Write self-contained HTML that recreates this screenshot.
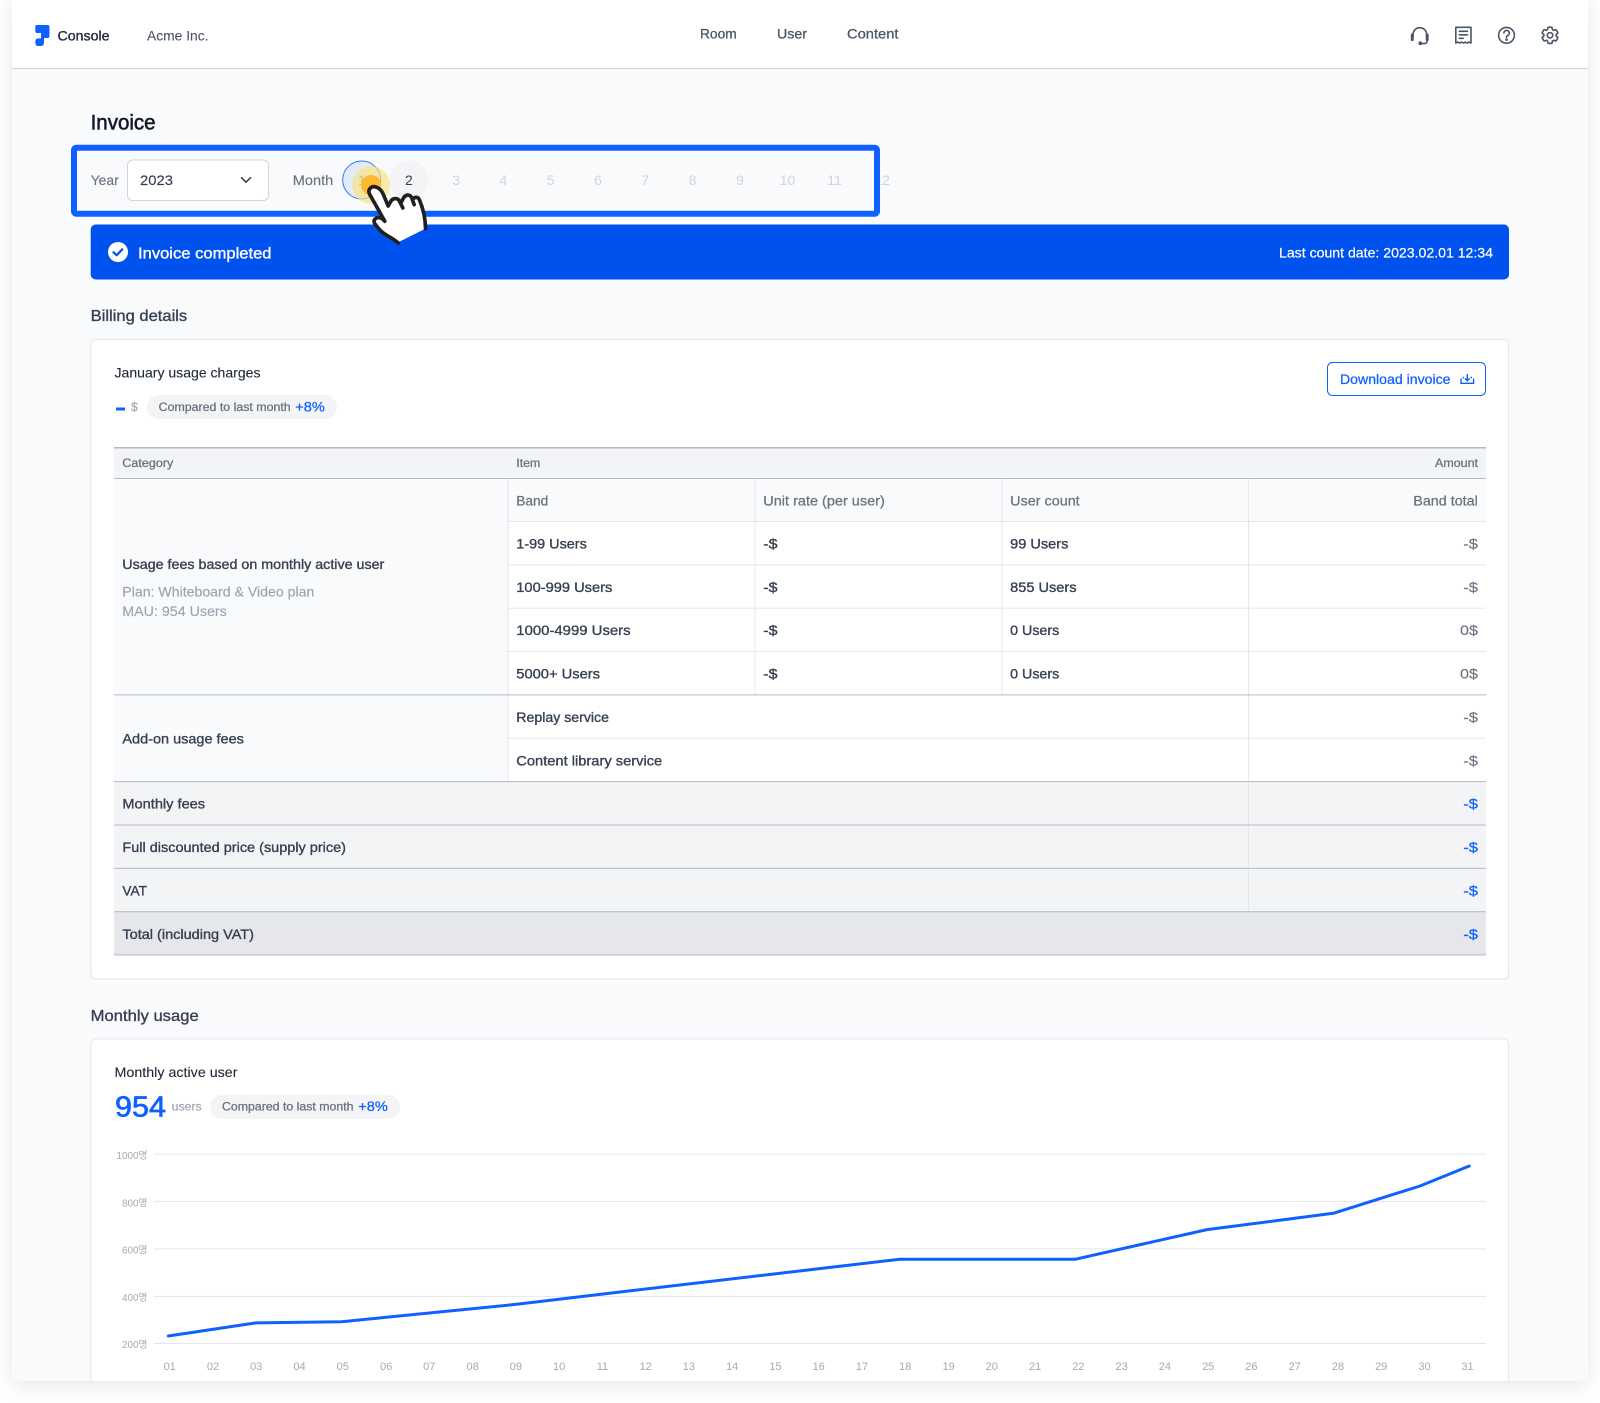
<!DOCTYPE html>
<html lang="en">
<head>
<meta charset="utf-8">
<title>Invoice - Console</title>
<style>
html,body{margin:0;padding:0;background:#fff;width:1600px;height:1403px;overflow:hidden}
svg{display:block;filter:blur(.25px)}
text{font-family:"Liberation Sans","Noto Sans CJK KR",sans-serif;font-size:14px;fill:#374151}
.m{stroke:#374151;stroke-width:.35px}
.s{stroke:#111827;stroke-width:.55px;fill:#111827}
.g{fill:#6b7280;stroke:#6b7280;stroke-width:.15px}
.gm{fill:#6b7280;stroke:#6b7280;stroke-width:.28px}
.l{fill:#9ca3af;stroke:#9ca3af;stroke-width:.15px}
.b{fill:#1060ff;stroke:#1060ff;stroke-width:.25px}
.off{fill:#d1d5db}
.c{font-size:12px}
.y{font-size:10px;fill:#a3a9b3}
.x{font-size:11px;fill:#a3a9b3}
</style>
</head>
<body>
<svg xmlns="http://www.w3.org/2000/svg" width="1600" height="1403" viewBox="0 0 1600 1403">
<defs>
<filter id="sh" x="-5%" y="-5%" width="110%" height="110%"><feDropShadow dx="0" dy="4" stdDeviation="10" flood-color="#000" flood-opacity=".1"/></filter>
<clipPath id="fr"><path d="M12 0H1588V1373a8 8 0 0 1-8 8H20a8 8 0 0 1-8-8Z"/></clipPath>
</defs>
<rect width="1600" height="1403" fill="#fff"/>
<path d="M12 0H1588V1373a8 8 0 0 1-8 8H20a8 8 0 0 1-8-8Z" fill="#f9fafb" filter="url(#sh)"/>
<g clip-path="url(#fr)">
<!-- header -->
<rect x="12" y="0" width="1576" height="68" fill="#fff"/>
<rect x="12" y="68" width="1576" height="1" fill="#d1d5db"/>
<path d="M37 25H47.5a2 2 0 0 1 2 2V36a2 2 0 0 1-2 2H44v5a3 3 0 0 1-3 3H38a2.6 2.6 0 0 1-2.6-2.6V41a2.6 2.6 0 0 1 2.6-2.6H41V33H37a1.7 1.7 0 0 1-1.7-1.7V26.7A1.7 1.7 0 0 1 37 25Z" fill="#1060ff"/>
<text x="57.5" y="40.5" textLength="52" lengthAdjust="spacingAndGlyphs" class="s" style="fill:#1f2937;stroke:#1f2937;stroke-width:.35px">Console</text>
<text x="147" y="40.5" textLength="61.5" lengthAdjust="spacingAndGlyphs" style="fill:#4b5563;stroke:#4b5563;stroke-width:.1px">Acme Inc.</text>
<text x="700" y="38.3" textLength="36.7" lengthAdjust="spacingAndGlyphs" style="fill:#4b5563;stroke:#4b5563;stroke-width:.3px">Room</text>
<text x="777" y="38.3" textLength="30" lengthAdjust="spacingAndGlyphs" style="fill:#4b5563;stroke:#4b5563;stroke-width:.3px">User</text>
<text x="847" y="38.3" textLength="51.5" lengthAdjust="spacingAndGlyphs" style="fill:#4b5563;stroke:#4b5563;stroke-width:.3px">Content</text>
<!-- header icons -->
<g fill="none" stroke="#4b5563" stroke-width="1.6" stroke-linecap="round" stroke-linejoin="round">
<path d="M1413 36v-1.5a6.8 6.8 0 0 1 13.6 0V36"/>
<path d="M1412.3 35v4.6M1427.2 35v4.6" stroke-width="3"/>
<path d="M1427 40v1a2.6 2.6 0 0 1-2.6 2.6H1421"/>
<circle cx="1420.3" cy="43.3" r="1.1" fill="#4b5563"/>
<path d="M1455.8 43V27.3H1471V43l-1.9-.9-1.9.9-1.9-.9-1.9.9-1.9-.9-1.9.9-1.9-.9Z"/>
<path d="M1459.3 31.3h8.2M1459.3 34.8h8.2M1459.3 38.3h3.9"/>
<circle cx="1506.5" cy="35.3" r="7.9"/>
<path d="M1503.9 33a2.7 2.7 0 1 1 3.9 2.5c-.8.4-1.3 1-1.3 1.8"/>
<circle cx="1506.5" cy="39.6" r=".5" fill="#4b5563"/>
<g transform="translate(1539.2 24.5) scale(.9)" stroke-width="1.85">
<path d="M9.594 3.94c.09-.542.56-.94 1.11-.94h2.593c.55 0 1.02.398 1.11.94l.213 1.281c.063.374.313.686.645.87.074.04.147.083.22.127.324.196.72.257 1.075.124l1.217-.456a1.125 1.125 0 011.37.49l1.296 2.247a1.125 1.125 0 01-.26 1.431l-1.003.827c-.293.24-.438.613-.431.992a6.759 6.759 0 010 .255c-.007.378.138.75.43.99l1.005.828c.424.35.534.954.26 1.43l-1.298 2.247a1.125 1.125 0 01-1.369.491l-1.217-.456c-.355-.133-.75-.072-1.076.124a6.57 6.57 0 01-.22.128c-.331.183-.581.495-.644.869l-.213 1.28c-.09.543-.56.941-1.11.941h-2.594c-.55 0-1.02-.398-1.11-.94l-.213-1.281c-.062-.374-.312-.686-.644-.87a6.52 6.52 0 01-.22-.127c-.325-.196-.72-.257-1.076-.124l-1.217.456a1.125 1.125 0 01-1.369-.49l-1.297-2.247a1.125 1.125 0 01.26-1.431l1.004-.827c.292-.24.437-.613.43-.992a6.932 6.932 0 010-.255c.007-.378-.138-.75-.43-.99l-1.004-.828a1.125 1.125 0 01-.26-1.43l1.297-2.247a1.125 1.125 0 011.37-.491l1.216.456c.356.133.751.072 1.076-.124.072-.044.146-.087.22-.128.332-.183.582-.495.644-.869l.214-1.281z"/>
<circle cx="12" cy="12" r="3"/>
</g>
</g>
<!-- title -->
<text x="90.6" y="129.6" textLength="65" lengthAdjust="spacingAndGlyphs" class="s" style="font-size:21px">Invoice</text>
<!-- filter row -->
<text x="90.7" y="185" textLength="28" lengthAdjust="spacingAndGlyphs" class="g">Year</text>
<rect x="127.5" y="160" width="141" height="40.5" rx="5" fill="#fff" stroke="#d1d5db"/>
<text x="140" y="185" textLength="33" lengthAdjust="spacingAndGlyphs" style="stroke:#374151;stroke-width:.15px">2023</text>
<path d="M241.5 177.7l4.5 4.5 4.5-4.5" fill="none" stroke="#374151" stroke-width="1.5" stroke-linecap="round" stroke-linejoin="round"/>
<text x="292.8" y="185" textLength="40.5" lengthAdjust="spacingAndGlyphs" class="g">Month</text>
<circle cx="361.7" cy="180" r="19" fill="#e3ebfa" stroke="#2f74ff"/>
<circle cx="408.9" cy="180" r="19.5" fill="#f3f4f6"/>
<text x="358" y="185" style="fill:#4f7fd8">1</text>
<text x="405" y="185">2</text>
<text x="452.3" y="185" class="off">3</text>
<text x="499.5" y="185" class="off">4</text>
<text x="546.8" y="185" class="off">5</text>
<text x="594.1" y="185" class="off">6</text>
<text x="641.4" y="185" class="off">7</text>
<text x="688.7" y="185" class="off">8</text>
<text x="736" y="185" class="off">9</text>
<text x="779.7" y="185" class="off">10</text>
<text x="827.3" y="185" class="off">11</text>
<text x="874.3" y="185" class="off">12</text>
<rect x="74" y="147.7" width="803" height="66" rx="2.5" fill="none" stroke="#1060ff" stroke-width="6"/>
<!-- banner -->
<rect x="90.7" y="224.5" width="1418.3" height="55" rx="5" fill="#0052ee"/>
<circle cx="118" cy="252" r="10" fill="#fff"/>
<path d="M113.5 252.3l3.2 3 5.6-6" fill="none" stroke="#0052ee" stroke-width="2.2" stroke-linecap="round" stroke-linejoin="round"/>
<text x="138" y="258.3" textLength="133.5" lengthAdjust="spacingAndGlyphs" style="font-size:16px;fill:#fff;stroke:#fff;stroke-width:.35px">Invoice completed</text>
<text x="1279" y="257.5" textLength="214" lengthAdjust="spacingAndGlyphs" style="fill:#fff;stroke:#fff;stroke-width:.2px">Last count date: 2023.02.01 12:34</text>
<!-- pointer -->
<circle cx="371" cy="185" r="19" fill="#fbe27a" fill-opacity=".65"/>
<circle cx="371" cy="185" r="10" fill="#fdb92e"/>
<g transform="translate(319.5 141.3) scale(.3333)">
<path d="M165 235C172 226 184 226 196 240L150 158C144 144 156 133 169 137C180 140 186 148 190 156L206 194L214 180C220 170 232 170 238 176L244 186L252 170C258 160 270 158 276 168L280 174C286 166 296 166 300 176C310 200 318 230 318 262L232 305C218 290 190 280 178 262C170 252 160 244 165 235Z" fill="#fff"/>
<path d="M236 305C218 288 190 280 178 262C170 252 160 244 165 235C172 226 184 226 196 240L150 158C144 144 156 133 169 137C180 140 186 148 190 156L206 194M206 194L214 180C220 170 232 170 238 176L250 200M244 186L252 170C258 160 270 158 276 168L284 190M280 174C286 166 296 166 300 176C310 200 318 230 318 262" fill="none" stroke="#231f20" stroke-width="11" stroke-linecap="round" stroke-linejoin="round"/>
</g>
<!-- billing details -->
<text x="90.7" y="321" textLength="96.5" lengthAdjust="spacingAndGlyphs" class="m" style="font-size:16px">Billing details</text>
<rect x="91" y="339.5" width="1417.5" height="639.5" rx="5" fill="#fff" stroke="#e5e7eb"/>
<text x="114.5" y="377.5" textLength="146" lengthAdjust="spacingAndGlyphs" style="fill:#1f2937;stroke:#1f2937;stroke-width:.12px">January usage charges</text>
<rect x="116" y="407.5" width="9" height="3" fill="#1060ff"/>
<text x="131" y="411" class="c l">$</text>
<rect x="147" y="395" width="190" height="24" rx="12" fill="#f3f4f6"/>
<text x="158.7" y="411" textLength="132" lengthAdjust="spacingAndGlyphs" class="c gm">Compared to last month</text>
<text x="295.3" y="411.5" textLength="29.5" lengthAdjust="spacingAndGlyphs" class="b">+8%</text>
<rect x="1327.5" y="362.5" width="158" height="33" rx="5" fill="#fff" stroke="#1060ff"/>
<text x="1340" y="384" textLength="110.5" lengthAdjust="spacingAndGlyphs" class="b">Download invoice</text>
<path d="M1461 378.5v4.8h12.6v-4.8M1464 377.5h-1.5M1472 377.5h-1.5M1467.3 374v6.5M1465 378.4l2.3 2.3 2.3-2.3" fill="none" stroke="#1060ff" stroke-width="1.4"/>
<!-- table backgrounds -->
<rect x="114" y="447" width="1372" height="31.5" fill="#f3f4f6"/>
<rect x="114" y="478.5" width="394" height="303" fill="#f9fafb"/>
<rect x="508" y="478.5" width="978" height="43" fill="#f9fafb"/>
<rect x="114" y="781.5" width="1372" height="130.2" fill="#f3f4f6"/>
<rect x="114" y="911.7" width="1372" height="43" fill="#e5e7eb"/>
<!-- table lines -->
<g fill="#e5e7eb">
<rect x="508" y="521" width="978" height="1"/>
<rect x="508" y="564.4" width="978" height="1"/>
<rect x="508" y="607.7" width="978" height="1"/>
<rect x="508" y="651" width="978" height="1"/>
<rect x="508" y="737.8" width="978" height="1"/>
<rect x="507.5" y="478.5" width="1" height="303"/>
<rect x="754.5" y="478.5" width="1" height="216.5"/>
<rect x="1001.5" y="478.5" width="1" height="216.5"/>
<rect x="1248" y="478.5" width="1" height="433"/>
</g>
<g fill="#b4b9c2">
<rect x="114" y="447" width="1372" height="1.5"/>
<rect x="114" y="478" width="1372" height="1"/>
<rect x="114" y="694.4" width="1372" height="1"/>
<rect x="114" y="781.1" width="1372" height="1"/>
<rect x="114" y="824.5" width="1372" height="1"/>
<rect x="114" y="867.8" width="1372" height="1"/>
<rect x="114" y="911.2" width="1372" height="1"/>
<rect x="114" y="954.5" width="1372" height="1"/>
</g>
<!-- table text -->
<text x="122.3" y="467" textLength="51" lengthAdjust="spacingAndGlyphs" class="c gm">Category</text>
<text x="516.3" y="467" textLength="24" lengthAdjust="spacingAndGlyphs" class="c gm">Item</text>
<text x="1435" y="467" textLength="43" lengthAdjust="spacingAndGlyphs" class="c gm">Amount</text>
<text x="516.3" y="505.3" textLength="32" lengthAdjust="spacingAndGlyphs" class="gm">Band</text>
<text x="763.3" y="505.3" textLength="121.5" lengthAdjust="spacingAndGlyphs" class="gm">Unit rate (per user)</text>
<text x="1010.2" y="505.3" textLength="69.5" lengthAdjust="spacingAndGlyphs" class="gm">User count</text>
<text x="1413.3" y="505.3" textLength="64.5" lengthAdjust="spacingAndGlyphs" class="gm">Band total</text>
<text x="122.3" y="568.8" textLength="262" lengthAdjust="spacingAndGlyphs" class="m">Usage fees based on monthly active user</text>
<text x="122.3" y="596.5" textLength="192" lengthAdjust="spacingAndGlyphs" class="l">Plan: Whiteboard &amp; Video plan</text>
<text x="122.3" y="616" textLength="104.5" lengthAdjust="spacingAndGlyphs" class="l">MAU: 954 Users</text>
<text x="516.3" y="548.7" textLength="70.5" lengthAdjust="spacingAndGlyphs" class="m">1-99 Users</text>
<text x="763.3" y="548.7" textLength="14.2" lengthAdjust="spacingAndGlyphs" class="m">-$</text>
<text x="1010.2" y="548.7" textLength="58.2" lengthAdjust="spacingAndGlyphs" class="m">99 Users</text>
<text x="1463.3" y="548.7" textLength="14.7" lengthAdjust="spacingAndGlyphs" class="g">-$</text>
<text x="516.3" y="592" textLength="96" lengthAdjust="spacingAndGlyphs" class="m">100-999 Users</text>
<text x="763.3" y="592" textLength="14.2" lengthAdjust="spacingAndGlyphs" class="m">-$</text>
<text x="1010.2" y="592" textLength="66.3" lengthAdjust="spacingAndGlyphs" class="m">855 Users</text>
<text x="1463.3" y="592" textLength="14.7" lengthAdjust="spacingAndGlyphs" class="g">-$</text>
<text x="516.3" y="635.2" textLength="114.3" lengthAdjust="spacingAndGlyphs" class="m">1000-4999 Users</text>
<text x="763.3" y="635.2" textLength="14.2" lengthAdjust="spacingAndGlyphs" class="m">-$</text>
<text x="1010.2" y="635.2" textLength="49" lengthAdjust="spacingAndGlyphs" class="m">0 Users</text>
<text x="1460" y="635.2" textLength="18" lengthAdjust="spacingAndGlyphs" class="g">0$</text>
<text x="516.3" y="678.7" textLength="83.7" lengthAdjust="spacingAndGlyphs" class="m">5000+ Users</text>
<text x="763.3" y="678.7" textLength="14.2" lengthAdjust="spacingAndGlyphs" class="m">-$</text>
<text x="1010.2" y="678.7" textLength="49" lengthAdjust="spacingAndGlyphs" class="m">0 Users</text>
<text x="1460" y="678.7" textLength="18" lengthAdjust="spacingAndGlyphs" class="g">0$</text>
<text x="122.4" y="743.7" textLength="121.5" lengthAdjust="spacingAndGlyphs" class="m">Add-on usage fees</text>
<text x="516.3" y="722" textLength="92.7" lengthAdjust="spacingAndGlyphs" class="m">Replay service</text>
<text x="1463.3" y="722" textLength="14.7" lengthAdjust="spacingAndGlyphs" class="g">-$</text>
<text x="516.3" y="765.3" textLength="145.9" lengthAdjust="spacingAndGlyphs" class="m">Content library service</text>
<text x="1463.3" y="765.3" textLength="14.7" lengthAdjust="spacingAndGlyphs" class="g">-$</text>
<text x="122.4" y="808.7" textLength="82.7" lengthAdjust="spacingAndGlyphs" class="m">Monthly fees</text>
<text x="1463.3" y="808.7" textLength="14.7" lengthAdjust="spacingAndGlyphs" class="b">-$</text>
<text x="122.4" y="852" textLength="223.6" lengthAdjust="spacingAndGlyphs" class="m">Full discounted price (supply price)</text>
<text x="1463.3" y="852" textLength="14.7" lengthAdjust="spacingAndGlyphs" class="b">-$</text>
<text x="122.4" y="895.6" textLength="24.6" lengthAdjust="spacingAndGlyphs" class="m">VAT</text>
<text x="1463.3" y="895.6" textLength="14.7" lengthAdjust="spacingAndGlyphs" class="b">-$</text>
<text x="122.4" y="939" textLength="131.6" lengthAdjust="spacingAndGlyphs" class="m">Total (including VAT)</text>
<text x="1463.3" y="939" textLength="14.7" lengthAdjust="spacingAndGlyphs" class="b">-$</text>
<!-- monthly usage -->
<text x="90.7" y="1021" textLength="108" lengthAdjust="spacingAndGlyphs" class="m" style="font-size:16px">Monthly usage</text>
<rect x="91" y="1039" width="1417.5" height="400" rx="5" fill="#fff" stroke="#e5e7eb"/>
<text x="114.5" y="1076.9" textLength="123" lengthAdjust="spacingAndGlyphs" style="fill:#1f2937;stroke:#1f2937;stroke-width:.12px">Monthly active user</text>
<text x="115" y="1116.5" textLength="51" lengthAdjust="spacingAndGlyphs" class="b" style="font-size:29px;stroke-width:.7px">954</text>
<text x="171.7" y="1110.7" textLength="30" lengthAdjust="spacingAndGlyphs" class="c l">users</text>
<rect x="210" y="1094.7" width="190" height="24" rx="12" fill="#f3f4f6"/>
<text x="222" y="1110.7" textLength="131.5" lengthAdjust="spacingAndGlyphs" class="c gm">Compared to last month</text>
<text x="358.3" y="1111" textLength="29.5" lengthAdjust="spacingAndGlyphs" class="b">+8%</text>
<!-- chart -->
<g fill="#e5e7eb">
<rect x="154" y="1153.6" width="1332" height="1"/>
<rect x="154" y="1201" width="1332" height="1"/>
<rect x="154" y="1248.3" width="1332" height="1"/>
<rect x="154" y="1295.9" width="1332" height="1"/>
<rect x="154" y="1343" width="1332" height="1"/>
</g>
<text x="116.5" y="1159" textLength="31" lengthAdjust="spacingAndGlyphs" class="y">1000명</text>
<text x="122" y="1206.3" textLength="25.5" lengthAdjust="spacingAndGlyphs" class="y">800명</text>
<text x="122" y="1253.5" textLength="25.5" lengthAdjust="spacingAndGlyphs" class="y">600명</text>
<text x="122" y="1300.8" textLength="25.5" lengthAdjust="spacingAndGlyphs" class="y">400명</text>
<text x="122" y="1348.2" textLength="25.5" lengthAdjust="spacingAndGlyphs" class="y">200명</text>
<g text-anchor="middle">
<text x="169.7" y="1370" class="x">01</text><text x="213" y="1370" class="x">02</text><text x="256.2" y="1370" class="x">03</text><text x="299.5" y="1370" class="x">04</text><text x="342.8" y="1370" class="x">05</text><text x="386.1" y="1370" class="x">06</text><text x="429.3" y="1370" class="x">07</text><text x="472.6" y="1370" class="x">08</text><text x="515.9" y="1370" class="x">09</text><text x="559.1" y="1370" class="x">10</text><text x="602.4" y="1370" class="x">11</text><text x="645.7" y="1370" class="x">12</text><text x="688.9" y="1370" class="x">13</text><text x="732.2" y="1370" class="x">14</text><text x="775.5" y="1370" class="x">15</text><text x="818.7" y="1370" class="x">16</text><text x="862" y="1370" class="x">17</text><text x="905.3" y="1370" class="x">18</text><text x="948.6" y="1370" class="x">19</text><text x="991.8" y="1370" class="x">20</text><text x="1035.1" y="1370" class="x">21</text><text x="1078.4" y="1370" class="x">22</text><text x="1121.6" y="1370" class="x">23</text><text x="1164.9" y="1370" class="x">24</text><text x="1208.2" y="1370" class="x">25</text><text x="1251.4" y="1370" class="x">26</text><text x="1294.7" y="1370" class="x">27</text><text x="1338" y="1370" class="x">28</text><text x="1381.2" y="1370" class="x">29</text><text x="1424.5" y="1370" class="x">30</text><text x="1467.5" y="1370" class="x">31</text>
</g>
<polyline points="168.3,1336 256,1322.9 341.7,1321.7 516.7,1304.3 580,1296.7 900,1259.2 1075.5,1259.2 1207,1229.6 1333.3,1213.3 1420,1186 1469.3,1166" fill="none" stroke="#1060ff" stroke-width="3" stroke-linecap="round" stroke-linejoin="round"/>
</g>
</svg>
</body>
</html>
